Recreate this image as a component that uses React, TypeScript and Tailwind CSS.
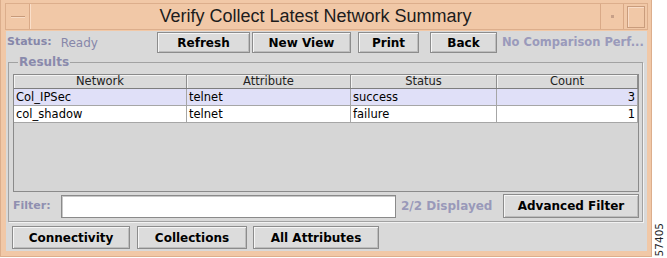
import React from "react";

const sans = "font-['DejaVu_Sans',sans-serif]";

interface BtnProps {
  label: string;
  className?: string;
}

// Motif-style push button
const Btn: React.FC<BtnProps> = ({ label, className = "" }) => (
  <button
    className={`flex items-center justify-center border border-[#8c8c8c] bg-[#dcdcdc] shadow-[inset_1px_1px_0_#f6f6f6,inset_-1px_-1px_0_#bdbdbd] text-[12px] font-bold leading-none text-black ${sans} ${className}`}
  >
    {label}
  </button>
);

const rows = [
  { network: "Col_IPSec", attribute: "telnet", status: "success", count: 3 },
  { network: "col_shadow", attribute: "telnet", status: "failure", count: 1 },
];

const cols = ["w-[173px]", "w-[164px]", "w-[146px]", "flex-1"];

export default function App() {
  return (
    <div className={`flex h-[258px] w-[667px] bg-white ${sans}`}>
      {/* window frame */}
      <div className="flex h-[257px] w-[652px] flex-col border-l border-r border-b border-[#dcae8c] bg-[#f1c8a7] pl-[5px] pr-[3px] pt-[3px]">
        {/* title bar */}
        <div className="-ml-[1px] flex h-[27px] w-[643px] border border-[#dcae8c]">
          <div className="flex w-[24px] items-center justify-center border-r border-[#d9a987]">
            <div className="h-[2px] w-[14px] border-t border-[#c79a7a] bg-[#f8dcc6]" />
          </div>
          <div className="flex flex-1 items-center justify-center border-l border-[#fadfca] font-['Liberation_Sans',sans-serif] text-[18px] text-[#1c1c1c]">
            Verify Collect Latest Network Summary
          </div>
          <div className="flex w-[24px] items-center justify-center border-x border-[#d9a987]">
            <div className="h-[3px] w-[3px] bg-[#c7a088]" />
          </div>
          <div className="flex w-[23px] items-center justify-center">
            <div className="h-[22px] w-[18px] border border-[#c99c7c] shadow-[inset_1px_1px_0_#f9dcc7]" />
          </div>
        </div>

        {/* client area */}
        <div className="mt-[1px] flex h-[220px] w-[641px] flex-col bg-[#d9d9d9]">
          {/* status / toolbar row */}
          <div className="flex h-[22px] items-start pt-[1px]">
            <div className="flex h-[21px] w-[151px] items-center pl-[1px] text-[#8787a9]">
              <span className="text-[11px] font-bold">Status:</span>
              <span className="ml-[9px] text-[12px]">Ready</span>
            </div>
            <Btn label="Refresh" className="h-[21px] w-[93px]" />
            <Btn label="New View" className="ml-[2px] h-[21px] w-[99px]" />
            <Btn label="Print" className="ml-[7px] h-[21px] w-[61px]" />
            <Btn label="Back" className="ml-[11px] h-[21px] w-[67px]" />
            <span className="ml-[5px] flex h-[21px] items-center whitespace-nowrap text-[11.5px] font-bold text-[#9a9abb]">
              No Comparison Perf...
            </span>
          </div>

          {/* Results group */}
          <fieldset className="ml-[2px] mt-[2px] w-[635px] border border-[#a2a2a2] pb-[3px] pl-[4px] pr-[3px] pt-[5px] shadow-[1px_1px_0_#f2f2f2]">
            <legend className="ml-[5px] px-[1px] text-[12px] font-bold leading-[14px] text-[#8a8aac]">
              Results
            </legend>

            {/* table scroll pane */}
            <div className="flex h-[118px] w-[626px] flex-col border border-[#8a8a8a] bg-[#d6d6d6]">
              <div className="flex h-[14px] border-b border-[#7e7e7e] bg-[#dadada] text-[11.5px] leading-[13px] text-[#222]">
                {["Network", "Attribute", "Status", "Count"].map((h, i) => (
                  <div
                    key={h}
                    className={`${cols[i]} border-r border-[#8e8e8e] text-center shadow-[inset_1px_1px_0_#f4f4f4]`}
                  >
                    {h}
                  </div>
                ))}
              </div>
              {rows.map((r, idx) => (
                <div
                  key={r.network}
                  className={`flex h-[17px] border-b border-[#a6a6a6] text-[11.5px] leading-[16px] text-black ${
                    idx === 0 ? "bg-[#e0e0f8]" : "bg-white"
                  }`}
                >
                  <div className={`${cols[0]} border-r border-[#a6a6a6] pl-[2px]`}>{r.network}</div>
                  <div className={`${cols[1]} border-r border-[#a6a6a6] pl-[2px]`}>{r.attribute}</div>
                  <div className={`${cols[2]} border-r border-[#a6a6a6] pl-[2px]`}>{r.status}</div>
                  <div className={`${cols[3]} border-r border-[#a6a6a6] pr-[2px] text-right`}>{r.count}</div>
                </div>
              ))}
            </div>

            {/* filter row */}
            <div className="mt-[2px] flex h-[24px] items-center">
              <span className="w-[48px] text-[11px] font-bold text-[#8f8fb0]">Filter:</span>
              <div className="h-[23px] w-[335px] border border-[#8a8a8a] bg-white shadow-[inset_1px_1px_0_#c8c8c8]" />
              <span className="ml-[5px] w-[102px] whitespace-nowrap text-[12px] font-bold text-[#9999b9]">
                2/2 Displayed
              </span>
              <Btn label="Advanced Filter" className="h-[24px] w-[136px]" />
            </div>
          </fieldset>

          {/* bottom buttons */}
          <div className="mt-[4px] flex pl-[6px]">
            <Btn label="Connectivity" className="h-[23px] w-[118px]" />
            <Btn label="Collections" className="ml-[7px] h-[23px] w-[110px]" />
            <Btn label="All Attributes" className="ml-[6px] h-[23px] w-[126px]" />
          </div>
        </div>
      </div>

      {/* figure number */}
      <div className="flex flex-1 items-end justify-center pb-[2px]">
        <span className="rotate-180 text-[10.5px] leading-none text-[#222] [writing-mode:vertical-rl]">
          57405
        </span>
      </div>
    </div>
  );
}
